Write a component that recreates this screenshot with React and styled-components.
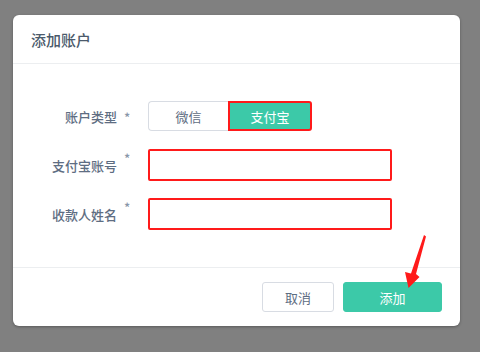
import React from "react";
import styled, { createGlobalStyle } from "styled-components";

const Global = createGlobalStyle`
  html, body { margin: 0; padding: 0; background: #808080; }
  body { font-family: "Noto Sans CJK SC", "Noto Sans", sans-serif; }
  * { box-sizing: border-box; }
`;

const Page = styled.div`
  width: 480px;
  height: 352px;
  padding: 15px 0 0 13px;
`;

const Dialog = styled.div`
  position: relative;
  width: 447px;
  background: #fff;
  border-radius: 6px;
  box-shadow: 0 1px 3px rgba(0, 0, 0, 0.3);
`;

const Header = styled.div`
  height: 49px;
  display: flex;
  align-items: center;
  padding-left: 18px;
  font-size: 15px;
  font-weight: 500;
  color: #4b5a6b;
  border-bottom: 1px solid #eceef0;
`;

const Body = styled.div`
  display: flex;
  flex-direction: column;
  gap: 17px;
  padding: 36px 0 37px;
  border-bottom: 1px solid #eceef0;
`;

const Row = styled.div`
  display: flex;
  align-items: center;
  height: 32px;
`;

const Label = styled.div`
  width: 135px;
  display: flex;
  justify-content: flex-end;
  align-items: center;
  padding-right: 17px;
  font-size: 13px;
  font-weight: 500;
  color: #5e6d82;
`;

const Star = styled.span`
  width: 7px;
  margin-left: 7px;
  font-size: 13px;
  color: #8a96a8;
  position: relative;
  top: ${(p) => (p.$raised ? "-7px" : "1px")};
`;

const Toggle = styled.div`
  display: flex;
  height: 30px;
`;

const ToggleBtn = styled.div`
  width: ${(p) => p.$w}px;
  display: flex;
  align-items: center;
  justify-content: center;
  font-size: 13px;
  ${(p) =>
    p.$active
      ? `background: #3cc9a8; color: #fff; border: 2px solid #ff1a1a; border-radius: 0 3px 3px 0;`
      : `background: #fff; color: #5e6d82; border: 1px solid #d8dce3; border-right: none; border-radius: 4px 0 0 4px;`}
`;

const Input = styled.input`
  width: 244px;
  height: 32px;
  border: 2px solid #ff1a1a;
  border-radius: 2px;
  outline: none;
  padding: 0 10px;
  font-size: 13px;
  font-family: inherit;
`;

const Footer = styled.div`
  display: flex;
  justify-content: flex-end;
  gap: 9px;
  padding: 14px 18px 14px 0;
`;

const Button = styled.button`
  width: ${(p) => p.$w}px;
  height: 30px;
  border-radius: 3px;
  font-size: 13px;
  font-family: inherit;
  cursor: pointer;
  ${(p) =>
    p.$primary
      ? `background: #3cc9a8; color: #fff; border: 1px solid #3cc9a8;`
      : `background: #fff; color: #5e6d82; border: 1px solid #d8dce3;`}
`;

const Arrow = styled.svg`
  position: absolute;
  left: 377px;
  top: 215px;
  width: 50px;
  height: 70px;
`;

export default function App() {
  return (
    <Page>
      <Global />
      <Dialog>
        <Header>添加账户</Header>
        <Body>
          <Row>
            <Label>
              账户类型<Star>*</Star>
            </Label>
            <Toggle>
              <ToggleBtn $w={80}>微信</ToggleBtn>
              <ToggleBtn $w={84} $active>支付宝</ToggleBtn>
            </Toggle>
          </Row>
          <Row>
            <Label>
              支付宝账号<Star $raised>*</Star>
            </Label>
            <Input />
          </Row>
          <Row>
            <Label>
              收款人姓名<Star $raised>*</Star>
            </Label>
            <Input />
          </Row>
        </Body>
        <Footer>
          <Button $w={72}>取消</Button>
          <Button $w={99} $primary>添加</Button>
        </Footer>
        <Arrow viewBox="0 0 50 70">
          <polygon points="34,5 36,6.5 26,44 29.5,47 18.5,58 15,42 21,43.5" fill="#ff1a1a" />
        </Arrow>
      </Dialog>
    </Page>
  );
}
